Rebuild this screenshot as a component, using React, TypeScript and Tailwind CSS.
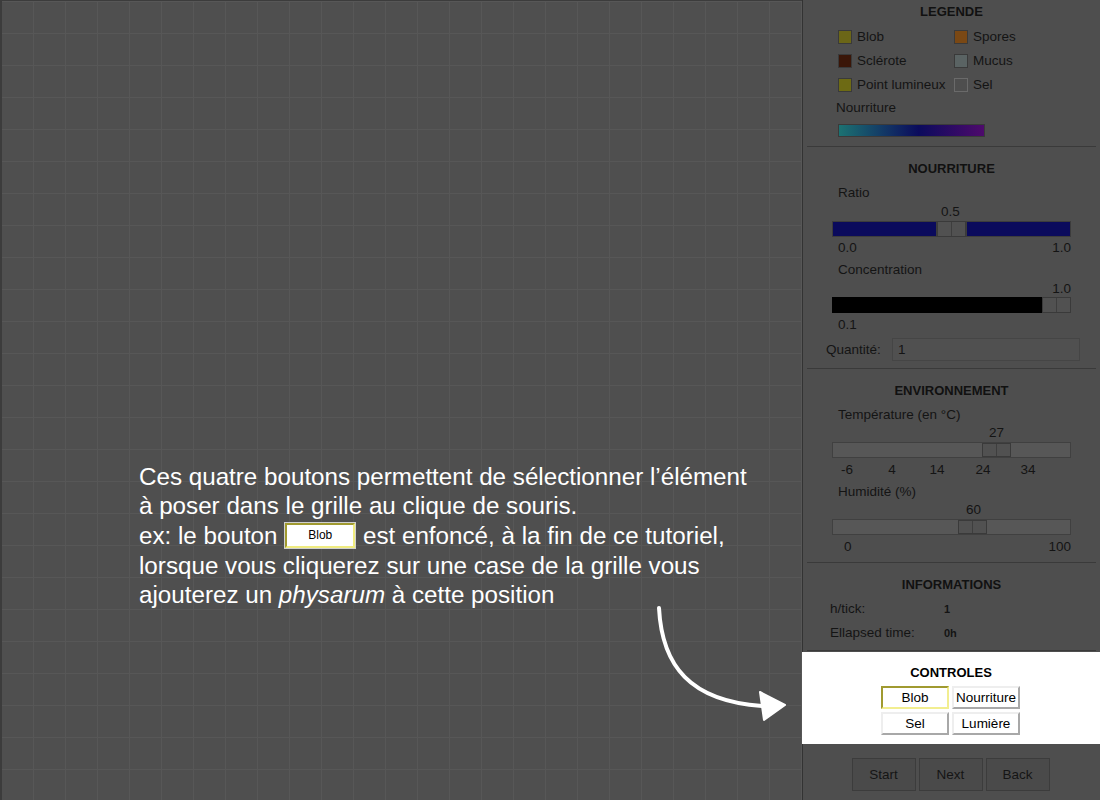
import React from "react";

const legend = [
  { label: "Blob", color: "bg-[#6b6617] border-[#3a3a3a]" },
  { label: "Spores", color: "bg-[#7a4814] border-[#3a3a3a]" },
  { label: "Sclérote", color: "bg-[#3a1608] border-[#3a3a3a]" },
  { label: "Mucus", color: "bg-[#5a6363] border-[#3a3a3a]" },
  { label: "Point lumineux", color: "bg-[#6d6a14] border-[#3a3a3a]" },
  { label: "Sel", color: "bg-transparent border-[#6a6a6a]" },
];

function Thumb() {
  return (
    <div className="flex h-full w-[29px] shrink-0 border border-[#3a3a3a] bg-[#515151]">
      <div className="h-full flex-1 border-r border-[#3e3e3e]" />
      <div className="h-full flex-1" />
    </div>
  );
}

function Track({ pos }: { pos: number }) {
  // pos = left offset of the thumb in px
  return (
    <div className="ml-[29px] flex h-[16px] w-[239px] border border-[#404040] bg-[#575757]">
      <div style={{ width: pos }} className="h-full" />
      <Thumb />
    </div>
  );
}

function SectionTitle({ children }: { children: React.ReactNode }) {
  return <h2 className="text-center text-[13px] font-bold leading-4 text-[#111]">{children}</h2>;
}

function Sidebar() {
  return (
    <aside className="flex w-[298px] shrink-0 flex-col border-l border-[#333] bg-[#4e4e4e] text-[13.5px] leading-4 text-[#141414]">
      {/* LEGENDE */}
      <section className="mx-[4px] h-[147px] border-b border-[#3a3a3a] pt-[4px]">
        <SectionTitle>LEGENDE</SectionTitle>
        <div className="mt-[5px] grid grid-cols-[116px_1fr] pl-[31px]">
          {legend.map((l) => (
            <div key={l.label} className="flex h-[24px] items-center gap-[5px]">
              <span className={`h-[14px] w-[14px] border ${l.color}`} />
              <span>{l.label}</span>
            </div>
          ))}
        </div>
        <p className="mt-[3px] pl-[29px]">Nourriture</p>
        <div className="ml-[31px] mt-[8px] h-[13px] w-[147px] border border-[#3a3a3a] bg-[linear-gradient(to_right,#1c7272,#0b0b5c_55%,#4e0a6c)]" />
      </section>

      {/* NOURRITURE */}
      <section className="mx-[4px] h-[222px] border-b border-[#3a3a3a] pt-[14px]">
        <SectionTitle>NOURRITURE</SectionTitle>
        <p className="mt-[8px] pl-[31px]">Ratio</p>
        <p className="mt-[3px] pl-[134px]">0.5</p>
        <div className="mt-[1px] ml-[-4px] flex h-[16px] w-[239px] translate-x-[29px]">
          <div className="h-full w-[105px] border border-[#3c3c3c] bg-[#0a0a5c]" />
          <Thumb />
          <div className="h-full flex-1 border border-[#3c3c3c] bg-[#0a0a5c]" />
        </div>
        <div className="mt-[3px] flex w-[264px] justify-between pl-[31px]">
          <span>0.0</span>
          <span>1.0</span>
        </div>
        <p className="mt-[6px] pl-[31px]">Concentration</p>
        <p className="mt-[3px] w-[264px] text-right">1.0</p>
        <div className="ml-[-4px] flex h-[16px] w-[239px] translate-x-[29px]">
          <div className="h-full flex-1 bg-black" />
          <Thumb />
        </div>
        <p className="mt-[4px] pl-[31px]">0.1</p>
        <div className="mt-[5px] flex items-center">
          <span className="w-[85px] pl-[19px]">Quantité:</span>
          <div className="flex h-[23px] w-[188px] items-center border border-[#454545] bg-[#505050] pl-[5px]">1</div>
        </div>
      </section>

      {/* ENVIRONNEMENT */}
      <section className="mx-[4px] h-[194px] border-b border-[#3a3a3a] pt-[14px]">
        <SectionTitle>ENVIRONNEMENT</SectionTitle>
        <p className="mt-[8px] pl-[31px]">Température (en °C)</p>
        <p className="mt-[2px] pl-[182px]">27</p>
        <div className="mt-[1px] ml-[-4px]">
          <Track pos={149} />
        </div>
        <div className="relative mt-[4px] h-[16px]">
          {[["-6", 40], ["4", 85], ["14", 130], ["24", 176], ["34", 221]].map(([t, x]) => (
            <span key={t} style={{ left: Number(x) - 8 }} className="absolute w-[16px] text-center">
              {t}
            </span>
          ))}
        </div>
        <p className="mt-[6px] pl-[31px]">Humidité (%)</p>
        <p className="mt-[2px] pl-[159px]">60</p>
        <div className="mt-[1px] ml-[-4px]">
          <Track pos={125} />
        </div>
        <div className="mt-[4px] flex w-[264px] justify-between pl-[37px]">
          <span>0</span>
          <span>100</span>
        </div>
      </section>

      {/* INFORMATIONS */}
      <section className="mx-[4px] h-[88px] border-b border-[#3a3a3a] pt-[14px]">
        <SectionTitle>INFORMATIONS</SectionTitle>
        <div className="mt-[8px] flex h-[16px] items-center pl-[23px]">
          <span className="w-[114px]">h/tick:</span>
          <span className="text-[11px] font-bold">1</span>
        </div>
        <div className="mt-[8px] flex h-[16px] items-center pl-[23px]">
          <span className="w-[114px]">Ellapsed time:</span>
          <span className="text-[11px] font-bold">0h</span>
        </div>
      </section>

      {/* CONTROLES (highlighted) */}
      <section className="relative z-10 -ml-px mt-[1px] h-[92px] bg-white pt-[13px] text-black">
        <h2 className="text-center text-[13px] font-bold leading-4">CONTROLES</h2>
        <div className="mt-[5px] grid w-full grid-cols-[68px_68px] justify-center gap-[3px] pr-[1px]">
          <button className="h-[23px] border-2 border-t-[#a09a30] border-l-[#a09a30] border-r-[#f2ee90] border-b-[#f2ee90] bg-white text-[13.5px]">
            Blob
          </button>
          {["Nourriture", "Sel", "Lumière"].map((b) => (
            <button
              key={b}
              className="h-[23px] border-2 border-t-[#eeeeee] border-l-[#eeeeee] border-r-[#a8a8a8] border-b-[#a8a8a8] bg-white text-[13.5px]"
            >
              {b}
            </button>
          ))}
        </div>
      </section>

      <div className="mt-[14px] flex justify-center gap-[3px] pr-[2px]">
        {["Start", "Next", "Back"].map((b) => (
          <button
            key={b}
            className="h-[33px] w-[64px] border border-[#3c3c3c] bg-[#4a4a4a] text-[13.5px] text-[#151515]"
          >
            {b}
          </button>
        ))}
      </div>
    </aside>
  );
}

export default function App() {
  return (
    <div
      className="flex h-[800px] w-[1100px] overflow-hidden bg-[#4e4e4e]"
      style={{ fontFamily: '"Liberation Sans", Arial, sans-serif' }}
    >
      <main className="relative flex-1 border-l-2 border-t border-[#3c3c3c] bg-[#4f4f4f] bg-[linear-gradient(to_right,#575757_1px,transparent_1px),linear-gradient(to_bottom,#575757_1px,transparent_1px)] bg-[size:32px_32px] bg-[position:-1px_0px]">
        <div className="absolute left-[137px] top-[461px] text-[24.2px] leading-[29.4px] text-white">
          <p>Ces quatre boutons permettent de sélectionner l’élément</p>
          <p>à poser dans le grille au clique de souris.</p>
          <p>
            ex: le bouton{" "}
            <span className="inline-flex h-[27px] w-[72px] translate-y-[-2px] items-center justify-center border border-[#cfcfcf] bg-white align-middle">
              <span className="flex h-full w-full items-center justify-center border-2 border-t-[#a09a30] border-l-[#a09a30] border-r-[#f0ec80] border-b-[#f0ec80] text-[12px] leading-none text-black">
                Blob
              </span>
            </span>{" "}
            est enfoncé, à la fin de ce tutoriel,
          </p>
          <p>lorsque vous cliquerez sur une case de la grille vous</p>
          <p>
            ajouterez un <em>physarum</em> à cette position
          </p>
        </div>
        <svg className="absolute left-0 top-0" width="800" height="800" viewBox="0 0 800 800">
          <path
            d="M657 607 C 660 665, 688 700, 760 705"
            fill="none"
            stroke="white"
            strokeWidth="4"
            strokeLinecap="round"
          />
          <polygon points="758,691 783,704 762,719" fill="white" stroke="white" strokeWidth="2" strokeLinejoin="round" />
        </svg>
      </main>
      <Sidebar />
    </div>
  );
}
